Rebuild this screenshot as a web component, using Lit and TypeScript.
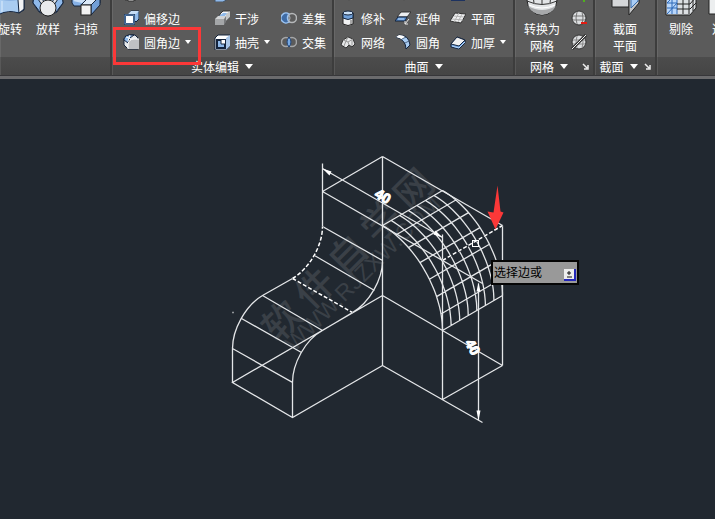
import { LitElement, html, svg, css, nothing } from "lit";
import { customElement } from "lit/decorators.js";

const N = "#14243d";
const L = "#e6e9ec";
const B = "#8fb9ea";

const small: Record<string, unknown> = {
  offset: svg`<path d="M5 4l3-3h8v8l-3 3z" fill="${B}" stroke="${N}"/><path d="M5 4l3-3h8l-3 3z" fill="#c5dcf5"/>
    <rect x="1" y="4" width="11" height="11" fill="${N}"/><rect x="2" y="5" width="9" height="9" stroke="#6d9cd6"/><rect x="3" y="6" width="7" height="7" fill="#fff"/>`,
  filletEdge: svg`<path d="M1 5Q2 1 6 1H12L15 4V15H5L1 11Z" fill="${L}" stroke="${N}"/>
    <path d="M1 5Q2 1 6 1H11Q6 3 5 9L1 6Z" fill="${B}" stroke="${N}"/><path d="M3 3L8 5M7 1L5 7" stroke="#fff"/>
    <path d="M5 15V10Q6 5 11 5H16V15Z" fill="#bfc1c4"/><path d="M5 15V10Q6 5 11 5H16" fill="none" stroke="#fff"/>`,
  interfere: svg`<path d="M6 4L9 1H16V7L12 11H6Z" fill="#f4f5f6" stroke="#333"/><path d="M12 4L16 1V7L12 11Z" fill="#c4c6c8"/>
    <path d="M5 6L9 3H13L11 6Z" fill="${B}"/><path d="M1 9L4 6H12L10 9Z" fill="#d2d4d6"/><path d="M1 9H10V15H1Z" fill="#a4a6a8"/><path d="M10 9L12 6V12L10 15Z" fill="#77797b"/>`,
  shell: svg`<path d="M1 4L4 1H16V12L12 16H1Z" fill="#fff" stroke="${N}"/><path d="M12 4L16 1V12L12 16Z" fill="#a9c6e8"/>
    <rect x="3" y="6" width="8" height="8" fill="${B}" stroke="${N}" stroke-width="2"/><path d="M7 6V10H11V6Z" fill="#fff"/><path d="M7 6V10H11" fill="none" stroke="${N}"/>`,
  subtract: svg`<circle cx="11" cy="8" r="4.5" stroke="#b5b7b9" stroke-width="1.5"/><path d="M8 4A5 5 0 1 0 8 12Q5 8 8 4Z" fill="#3f6ca6" stroke="#9cc4f2" stroke-width="1.5"/><path d="M7 4Q11 8 7 12" fill="none" stroke="#b5b7b9"/>`,
  intersect: svg`<circle cx="5" cy="8" r="4.5" fill="none" stroke="#a5a7a9" stroke-width="1.5"/><circle cx="11" cy="8" r="4.5" fill="none" stroke="#a5a7a9" stroke-width="1.5"/><path d="M8 3Q12 8 8 13Q4 8 8 3Z" fill="#77a9e4" stroke="#1a3d70"/>`,
  patch: svg`<path d="M3 3V14Q8 17 13 14V3Z" fill="#f2f3f4" stroke="#222"/><path d="M3 3V8Q8 11 13 8V3Q8 0 3 3Z" fill="#6f9fd8" stroke="${N}"/><ellipse cx="8" cy="3" rx="5" ry="2" fill="#c9dff6" stroke="${N}"/><path d="M11 10V14" stroke="#aaa" stroke-width="2"/>`,
  network: svg`<path d="M1 11L3 6L8 3L13 5L15 10L12 13L9 11L6 14Z" fill="#e6e7e8" stroke="#333"/><path d="M3 6L8 8L13 5M8 3L6 7L4 12M8 8L9 11M12 6L12 12" stroke="#999" fill="none"/>`,
  extend: svg`<path d="M6 2H16L12 7H2Z" fill="#eceef0" stroke="#333"/><path d="M3 7H12L10 11H0Z" fill="#5f94d5" stroke="${N}"/><path d="M3 9H9" stroke="#b9d6f6"/><path d="M14 9L10 14M10 11V14H13" stroke="#e8e8e8" fill="none"/>`,
  fillet: svg`<path d="M1 3L4 1Q14 1 15 11L11 15Q11 6 1 3Z" fill="#a9ccf2" stroke="${N}"/><path d="M1 3L4 1Q8 1 10 3L7 5Z" fill="#fff"/><path d="M7 5L11 3M10 9L14 7" stroke="${N}" opacity=".6"/>`,
  planar: svg`<path d="M5 3L16 4L11 13L0 11Z" fill="#eff0f1" stroke="#333"/><path d="M9 3L4 12M12 4L8 12M4 6L14 7M2 9L13 10" stroke="#b5b5b5"/>`,
  thicken: svg`<path d="M1 10L7 3L15 6V9L9 15L1 13Z" fill="#6ea1df" stroke="${N}"/><path d="M1 10L7 3L15 6L9 12Z" fill="#f2f2f2" stroke="${N}"/><path d="M2 12L9 14L15 8" fill="none" stroke="#b4d5f8"/>`,
  meshLess: svg`<circle cx="8" cy="8" r="7" fill="#dcdee0" stroke="#333"/><path d="M2 6H14M2 10H14M6 2Q4 8 6 14M11 2Q13 8 11 14" stroke="#777" fill="none"/><rect x="10" y="12" width="6" height="2" fill="#e21b12"/>`,
  meshNone: svg`<circle cx="8" cy="8" r="7" fill="#dcdee0" stroke="#333"/><path d="M2 6H14M2 10H14M6 2Q4 8 6 14M11 2Q13 8 11 14" stroke="#888" fill="none"/><path d="M1 15L15 1" stroke="#333" stroke-width="3"/><path d="M1 15L15 1" stroke="#f0f0f0"/>`,
  topWhite: svg`<path d="M2 9H13V14H11V15H5V14H2Z" fill="#eee" stroke="#333"/>`,
  topBlue: svg`<path d="M1 9H9L14 10V13L9 16H1Z" fill="${B}" stroke="#456"/>`,
  topNavy: svg`<path d="M1 9H15V15H1Z" fill="#1d3260"/>`,
  topPin: svg`<path d="M8 9L9 15L10 9Z" fill="#333"/>`,
  topMore: svg`<path d="M2 8L12 14V8Z" fill="#e6e6e6"/><path d="M10 12H16V14H14V16H12V14H10Z" fill="#4fb21c"/>`,
};

const big: Record<string, unknown> = {
  revolve: svg`<path d="M0 8H30V25L25 28Q14 24 4 30L0 27Z" fill="#7fa9dc" stroke="${N}"/><path d="M4 14Q14 17 24 15V27Q14 24 4 29Z" fill="#a9ccf1"/><path d="M8 16V27M4 16V29" stroke="#dcecfc"/><path d="M24 15L30 9V24L25 28Z" fill="#f2f3f4" stroke="${N}"/>`,
  loft: svg`<path d="M2 10H30L31 18L25 27L16 31L7 27L1 18Z" fill="#dfe3e7" stroke="${N}"/><path d="M2 10L1 18L8 27L10 20L6 14Z" fill="#8fb9ea" stroke="${N}"/><path d="M30 10L31 18L24 27L22 20L26 14Z" fill="#8fb9ea" stroke="${N}"/><path d="M8 10L12 17H20L25 10Z" fill="#b9d4f2" stroke="${N}"/><circle cx="16" cy="23" r="8" fill="#e9ebed" stroke="#222"/>`,
  sweep: svg`<path d="M2 8H30V18L22 27L12 21H4L2 18Z" fill="#86b1e6" stroke="${N}"/><path d="M3 16L12 18L20 12L14 9Z" fill="#cce1f8"/><path d="M11 20L20 11H30L22 20Z" fill="#dbe9f8" stroke="${N}"/><path d="M21 20L30 11V20L21 30Z" fill="#719fd8" stroke="${N}"/><rect x="11" y="20" width="10" height="10" fill="#f2f2f2" stroke="#222"/>`,
  toMesh: svg`<circle cx="16" cy="15" r="15" fill="#e2e4e6" stroke="#222"/><path d="M2 21Q16 29 30 21Q26 29 16 30Q6 29 2 21Z" fill="#a7a9ab"/><path d="M1 16Q16 23 31 16M16 1V19M8 3Q6 10 8 18M24 3Q26 10 24 18" stroke="#333" fill="none"/><path d="M3 20Q16 26 29 20" stroke="#fff" fill="none"/>`,
  section: svg`<path d="M3 10H20V22H3Z" fill="#d5d7d9" stroke="#222"/><path d="M20 10L30 8V18L20 30Z" fill="#c4c6c8" stroke="#222"/><path d="M22 11L29 9V16L22 23Z" fill="#a9cdf5" stroke="#386dad"/>`,
  cull: svg`<path d="M1 8H31V23L25 30H1Z" fill="#dcdfe2" stroke="#222"/><path d="M2 8H12V29H2Z" fill="#b8d6fa"/><path d="M7 8V29M12 8V29M2 18H12M2 23H12M2 29L12 18M2 18L12 8" stroke="#2d69b8" fill="none"/><path d="M18 12V29M24 12V29M12 19H25L31 12M12 24H25L31 18M28 10V26" stroke="#222" fill="none"/>`,
  solid: svg`<path d="M1 10H30V29H1Z" fill="#eceeef" stroke="#222"/>`,
};

type Item = [string, string, boolean?];

// isometric helpers for the rounded surface patch: centre, vertical and horizontal half axes
const arcPoint = (deg: number, shift: number) => {
  const a = (deg * Math.PI) / 180;
  return [382 + 60 * Math.sin(a) + 60 * shift, 295 - 70 * Math.cos(a) + 35 * Math.sin(a) - 35 * shift];
};
const steps = Array.from({ length: 8 }, (_, i) => i / 7);
const meshPath = [
  ...steps.map((s) => "M" + Array.from({ length: 31 }, (_, i) => arcPoint(i * 3, s).map((v) => v.toFixed(1)).join(" ")).join("L")),
  ...steps.map((s) => `M${arcPoint(s * 90, 0).join(" ")}L${arcPoint(s * 90, 1).join(" ")}`),
].join("");

@customElement("app-root")
export class AppRoot extends LitElement {
  static styles = css`
    :host { display: flex; flex-direction: column; min-height: 100vh; background: #212830; color: #fff;
      font: 12px/17px "Noto Sans CJK SC", sans-serif; overflow: hidden; }
    * { box-sizing: border-box; }
    button { font: inherit; color: inherit; background: none; border: 0; padding: 0; margin: 0; white-space: nowrap; }
    svg { display: block; flex: none; }
    .ribbon { display: flex; border-bottom: 3px solid #6b6b6d; background: #5b5b5b; }
    .panel { position: relative; flex: none; display: flex; flex-direction: column; border-right: 2px solid #3d3d3d;
      border-bottom: 1px solid #37373a; box-shadow: inset 1px 0 #686868; }
    .last { flex: 1; min-width: 0; border-right: 0; }
    .create { width: 112px; }
    .edit { width: 222px; }
    .surface { width: 181px; }
    .mesh { width: 80px; }
    .sect { width: 62px; }
    .body { height: 57px; overflow: hidden; display: flex; align-items: flex-end; padding-bottom: 3px; }
    .create .body { justify-content: flex-end; padding-right: 5px; }
    .edit .body { padding-left: 11px; }
    .surface .body { padding-left: 6px; }
    .mesh .body { padding-left: 8px; gap: 10px; }
    .sect .body { justify-content: center; }
    .last .body { padding-left: 5px; gap: 5px; }
    .tools { display: grid; grid-auto-rows: 24px; }
    .edit .tools { grid-template-columns: 91px 67px auto; }
    .surface .tools { grid-template-columns: 55px 55px auto; }
    .tool { display: flex; align-items: center; gap: 5px; }
    .big { flex: none; min-width: 38px; display: flex; flex-direction: column; align-items: center; gap: 3px; }
    .label { height: 34px; text-align: center; white-space: pre-line; }
    .title { height: 18px; background: linear-gradient(#4c4c4c, #454545); box-shadow: inset 1px 0 #585858; display: flex; align-items: center; justify-content: center; gap: 6px; padding: 0 4px; white-space: nowrap; }
    .mesh .title { padding-left: 15px; justify-content: flex-start; }
    .mesh .launcher { margin-left: 8px; }
    .mark { position: absolute; left: 1px; top: 27px; width: 88px; height: 38px; border: 3px solid #fb3838; pointer-events: none; }
    .canvas { position: relative; flex: 1; min-height: 400px; }
    .drawing { position: absolute; inset: 0; width: 100%; height: 100%; }
    .wm { fill: #3a4047; font-family: "Noto Sans CJK SC", sans-serif; font-size: 38px; font-weight: 500; text-anchor: middle; }
    .site { fill: #3a4047; font-family: "Liberation Sans", sans-serif; font-size: 23px; }
    .dim { fill: #fff; stroke: #fff; font: bold 14px "Liberation Sans", sans-serif; text-anchor: middle; }
    .prompt { position: absolute; left: 491px; top: 181px; width: 88px; height: 25px; display: flex; align-items: center; justify-content: space-between;
      padding: 0 1px; border: 2px solid #050505; background: #999; color: #000; }
    .prompt svg { margin-top: 5px; }
    .prompt span { margin-top: -3px; }
  `;

  private icon(name: string) {
    return html`<svg width="16" height="16" fill="none" aria-hidden="true">${small[name]}</svg>`;
  }

  private caret() {
    return html`<svg width="6" height="4" aria-hidden="true"><path d="M0 0H6L3 4Z" fill="#fff" /></svg>`;
  }

  private tool([icon, label, more]: Item) {
    return html`<button class="tool" aria-label=${label || icon}>${this.icon(icon)}${label ? html`<span>${label}</span>` : nothing}${more ? this.caret() : nothing}</button>`;
  }

  private bigTool(icon: string, label: string) {
    return html`<button class="big"><svg width="32" height="32" fill="none" aria-hidden="true">${big[icon]}</svg><span class="label">${label}</span></button>`;
  }

  private title(text: string, launcher = false) {
    return html`<div class="title">${text ? html`<span>${text}</span><svg width="8" height="5" aria-hidden="true"><path d="M0 0H8L4 5Z" fill="#fff" /></svg>` : nothing}
      ${launcher ? html`<button class="launcher" aria-label=${text}><svg width="7" height="7" fill="none" aria-hidden="true"><path d="M1 1L5 5M6 2V6H2" stroke="#eee" stroke-width="1.5" /></svg></button>` : nothing}</div>`;
  }

  render() {
    const edit: Item[] = [["topWhite", ""], ["topBlue", ""], ["", ""], ["offset", "偏移边"], ["interfere", "干涉"], ["subtract", "差集"], ["filletEdge", "圆角边", true], ["shell", "抽壳", true], ["intersect", "交集"]];
    const surface: Item[] = [["topPin", ""], ["topPin", ""], ["topNavy", ""], ["patch", "修补"], ["extend", "延伸"], ["planar", "平面"], ["network", "网络"], ["fillet", "圆角"], ["thicken", "加厚", true]];
    return html`
      <header class="ribbon">
        <section class="panel create"><div class="body">${this.bigTool("revolve", "旋转")}${this.bigTool("loft", "放样")}${this.bigTool("sweep", "扫掠")}</div>${this.title("")}</section>
        <section class="panel edit"><div class="body"><div class="tools">${edit.map((i) => (i[0] ? this.tool(i) : html`<span></span>`))}</div></div>${this.title("实体编辑")}<div class="mark"></div></section>
        <section class="panel surface"><div class="body"><div class="tools">${surface.map((i) => this.tool(i))}</div></div>${this.title("曲面")}</section>
        <section class="panel mesh"><div class="body">${this.bigTool("toMesh", "转换为\n网格")}<div class="tools">${this.tool(["topMore", ""])}${this.tool(["meshLess", ""])}${this.tool(["meshNone", ""])}</div></div>${this.title("网格", true)}</section>
        <section class="panel sect"><div class="body">${this.bigTool("section", "截面\n平面")}</div>${this.title("截面", true)}</section>
        <section class="panel last"><div class="body">${this.bigTool("cull", "剔除")}${this.bigTool("solid", "选择")}</div>${this.title("")}</section>
      </header>
      <main class="canvas">
        <svg class="drawing" fill="none">
          <g transform="translate(0.5 -78.5)">
            ${["软", "件", "自", "学", "网"].map((c, i) => svg`<text class="wm" transform="translate(${291 + i * 33} ${330 - i * 33}) rotate(-45)">${c}</text>`)}
            <text class="site" transform="translate(294 352) rotate(-45)">WWW.RJZXW.COM</text>
            <g stroke="#e4e6e8" stroke-width="1.3">
              <path d="M382 156L322 191M382 156L502 225M382 156V365M322 163V226M322 191L482 283M442 234V399M502 225V365
                M382 295L502 365M382 365L482 422M442 399L502 365M382 365L292 417L232 382L382 295M232 382V348L292 382V417
                M232 348C232 329 245 305 262 295L292 278M292 382C292 363 305 339 322 330L352 312C369 302 382 279 382 260
                M241 318L301 352M262 295L322 330M314 255L374 290M322 226L382 260M322 168L442 237M478 283V420" />
              <path d=${meshPath} />
            </g>
            <path d="M292 278C309 268 322 245 322 226M292 278L352 312M442 260L502 225" stroke="#212830" stroke-width="2" />
            <path d="M292 278C309 268 322 245 322 226M292 278L352 312M442 260L502 225" stroke="#fff" stroke-width="1.5" stroke-dasharray="4 2" />
            <path d="M322 168L331 171L329 175ZM442 237L433 234L435 230ZM478 282L480 291H476ZM478 420L480 410H476Z" fill="#fff" />
            <rect x="472" y="240" width="6" height="6" stroke="#fff" />
            <path d="M232 312H233" stroke="#fff" stroke-width="1.5" />
            <text class="dim" transform="translate(380 200) rotate(30)">40</text>
            <text class="dim" transform="translate(468 349) rotate(60)">40</text>
            <path d="M497 185L500 211L503 212L495 229L487 211L493 212Z" fill="#fb3838" />
          </g>
        </svg>
        <div class="prompt"><span>选择边或</span><svg width="12" height="12" fill="none" aria-hidden="true"><path d="M0 0H11V11H0Z" fill="#eee" /><path d="M11 0V11H0" stroke="#2326b8" stroke-width="2" /><path d="M5 2V6M3 4H7M3 8H8" stroke="#111" /></svg></div>
      </main>`;
  }
}
